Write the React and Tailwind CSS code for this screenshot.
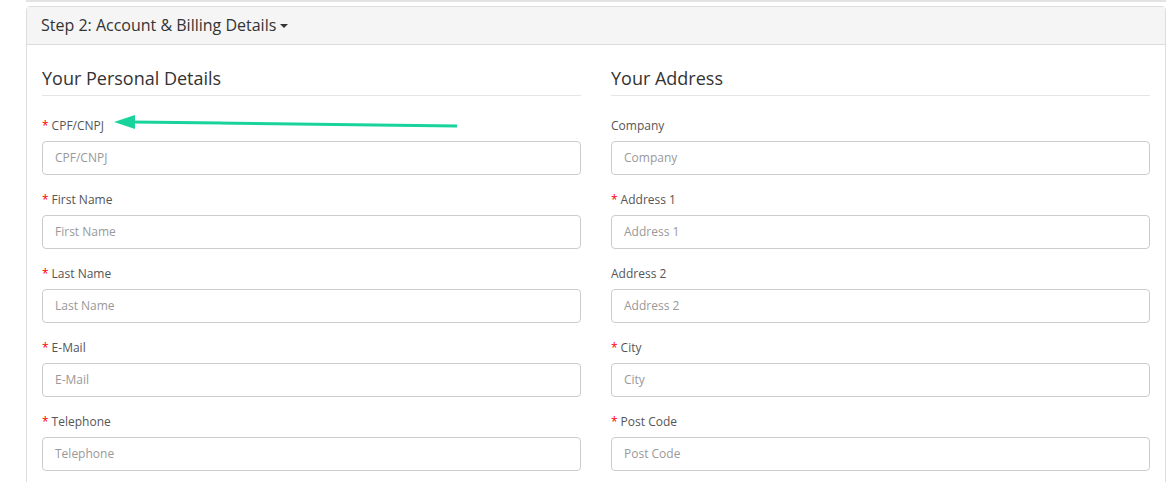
import React from 'react';

const leftFields = [
  { label: 'CPF/CNPJ', required: true },
  { label: 'First Name', required: true },
  { label: 'Last Name', required: true },
  { label: 'E-Mail', required: true },
  { label: 'Telephone', required: true },
];

const rightFields = [
  { label: 'Company', required: false },
  { label: 'Address 1', required: true },
  { label: 'Address 2', required: false },
  { label: 'City', required: true },
  { label: 'Post Code', required: true },
];

const Field = ({ label, required }) => (
  <div className="mb-[16px]">
    <label className="block h-[17px] text-[12px] leading-[17px] text-[#555] mb-[7px]">
      {required && <span className="text-[#f00] mr-[3px]">*</span>}
      {label}
    </label>
    <input
      type="text"
      placeholder={label}
      className="block w-full h-[34px] px-[12px] pb-[2px] text-[12px] text-[#555] placeholder:text-[#999] bg-white border border-[#ccc] rounded-[4px] outline-none"
    />
  </div>
);

const Column = ({ title, fields }) => (
  <div>
    <h3 className="text-[18px] leading-[26px] text-[#333] pb-[4px] border-b border-[#e5e5e5] mb-[21px]">
      {title}
    </h3>
    {fields.map((f) => (
      <Field key={f.label} {...f} />
    ))}
  </div>
);

export default function App() {
  return (
    <div className="w-[1171px] h-[482px] overflow-hidden bg-white font-['Open_Sans',sans-serif]">
      <div className="ml-[26px] w-[1140px] h-[2px] bg-[#e3e3e3]" />
      <div className="relative ml-[26px] mt-[4px] w-[1140px] border border-[#ddd] rounded-t-[4px]">
        {/* header */}
        <div className="h-[38px] bg-[#f5f5f5] border-b border-[#ddd] px-[14px] pb-[2px] flex items-center text-[16px] text-[#333]">
          Step 2: Account &amp; Billing Details
          <span className="ml-[4px] mt-[2px] w-0 h-0 border-l-[4px] border-r-[4px] border-t-[4px] border-l-transparent border-r-transparent border-t-[#333]" />
        </div>

        {/* body */}
        <div className="pt-[20px] pl-[15px] pr-[15px] grid grid-cols-[539px_539px] gap-x-[30px]">
          <Column title="Your Personal Details" fields={leftFields} />
          <Column title="Your Address" fields={rightFields} />
        </div>

        {/* annotation arrow */}
        <svg
          className="absolute left-[86px] top-[105px]"
          width="350"
          height="24"
          viewBox="0 0 350 24"
        >
          <line x1="18" y1="10" x2="344" y2="14" stroke="#19d39c" strokeWidth="3" />
          <polygon points="1,10 22,3 22,17" fill="#19d39c" />
        </svg>
      </div>
    </div>
  );
}
